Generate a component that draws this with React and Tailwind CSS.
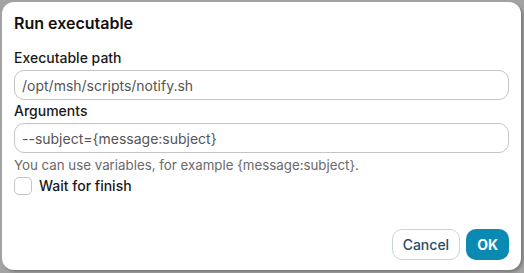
import React, { useState } from 'react';

const App = () => {
  const [path, setPath] = useState('/opt/msh/scripts/notify.sh');
  const [args, setArgs] = useState('--subject={message:subject}');
  const [wait, setWait] = useState(false);

  return (
    <div className="h-[273px] w-[524px] bg-[#a3a3a3] pt-[2px] pl-[2px] pr-[3px] pb-[3px] font-['Inter',sans-serif]">
      <div className="flex h-full flex-col rounded-[12px] bg-white px-[12px] pt-[11px] pb-[10px] shadow-[2px_2px_3px_rgba(0,0,0,0.25)]">
        {/* Title */}
        <h2 className="text-[16px] font-semibold leading-[20px] text-[#111]">Run executable</h2>

        {/* Executable path */}
        <label className="mt-[16px] text-[14px] font-medium leading-[18px] text-[#1a1a1a]">Executable path</label>
        <input
          value={path}
          onChange={(e) => setPath(e.target.value)}
          className="mt-[3px] h-[30px] rounded-[10px] border border-[#c4c4c4] px-[7px] text-[14px] text-[#555] outline-none"
        />

        {/* Arguments */}
        <label className="mt-[2px] text-[14px] font-medium leading-[18px] text-[#1a1a1a]">Arguments</label>
        <input
          value={args}
          onChange={(e) => setArgs(e.target.value)}
          className="mt-[3px] h-[30px] rounded-[10px] border border-[#c4c4c4] px-[7px] text-[14px] text-[#555] outline-none"
        />
        <p className="mt-[4px] text-[13.3px] leading-[17px] text-[#6a6a6a]">
          You can use variables, for example {'{message:subject}'}.
        </p>

        <label className="mt-[1px] flex items-center gap-[7px]">
          <input
            type="checkbox"
            checked={wait}
            onChange={() => setWait(!wait)}
            className="h-[18px] w-[18px] appearance-none rounded-[5px] border border-[#c4c4c4] bg-white"
          />
          <span className="text-[14px] font-medium text-[#1a1a1a]">Wait for finish</span>
        </label>

        {/* Actions */}
        <div className="mt-auto flex justify-end gap-[6px]">
          <button className="h-[31px] rounded-[10px] border border-[#c8d4d8] bg-white px-[10px] text-[14px] font-medium text-[#1d4f6e]">
            Cancel
          </button>
          <button className="h-[31px] rounded-[10px] bg-[#0a8ab3] px-[11px] text-[14px] font-bold text-white">
            OK
          </button>
        </div>
      </div>
    </div>
  );
};

export default App;
